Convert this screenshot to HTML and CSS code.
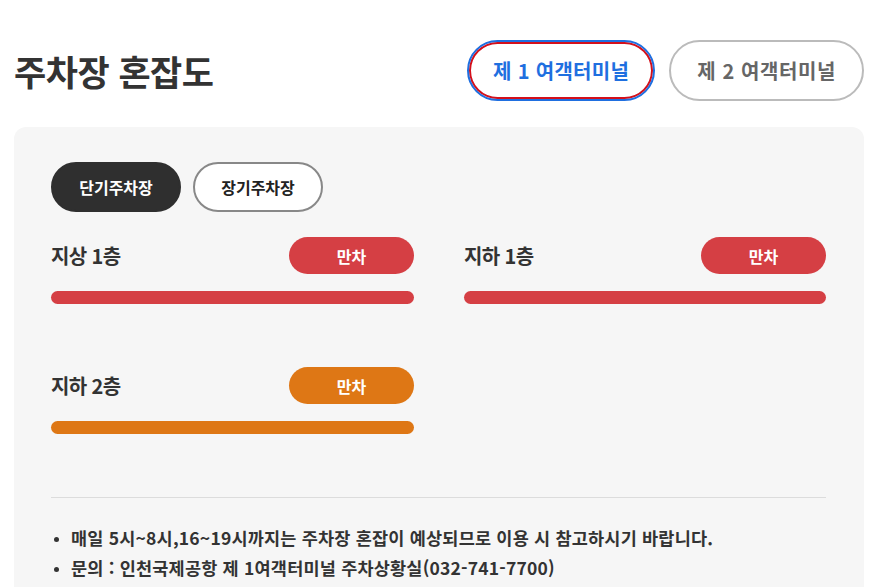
FILE: index.html
```html
<!DOCTYPE html>
<html lang="ko">
<head>
<meta charset="utf-8">
<title>주차장 혼잡도</title>
<link rel="stylesheet" href="styles.css">
</head>
<body>
<div class="page">
  <header class="head">
    <h1 class="title">주차장 혼잡도</h1>
    <div class="terminals">
      <button class="term term-active">제 1 여객터미널</button>
      <button class="term">제 2 여객터미널</button>
    </div>
  </header>
  <section class="card">
    <div class="tabs">
      <button class="tab tab-active">단기주차장</button>
      <button class="tab">장기주차장</button>
    </div>
    <div class="floors">
      <div class="floor">
        <div class="floor-head">
          <span class="floor-name">지상 1층</span>
          <span class="badge red">만차</span>
        </div>
        <div class="bar red"></div>
      </div>
      <div class="floor">
        <div class="floor-head">
          <span class="floor-name">지하 1층</span>
          <span class="badge red">만차</span>
        </div>
        <div class="bar red"></div>
      </div>
      <div class="floor">
        <div class="floor-head">
          <span class="floor-name">지하 2층</span>
          <span class="badge orange">만차</span>
        </div>
        <div class="bar orange"></div>
      </div>
    </div>
    <ul class="notes">
      <li>매일 5시~8시,16~19시까지는 주차장 혼잡이 예상되므로 이용 시 참고하시기 바랍니다.</li>
      <li>문의 : 인천국제공항 제 1여객터미널 주차상황실(032-741-7700)</li>
    </ul>
  </section>
</div>
</body>
</html>
```
FILE: styles.css
```css
* { box-sizing: border-box; }
html, body { margin: 0; padding: 0; background: #fff; }
body {
  font-family: "Noto Sans CJK KR", "Noto Sans", sans-serif;
  color: #333;
}
.page {
  padding: 40px 16px 0 14px;
}
.head {
  display: flex;
  align-items: center;
  justify-content: space-between;
}
.title {
  margin: 0;
  font-size: 35px;
  font-weight: 700;
  letter-spacing: -0.5px;
  color: #333;
  line-height: 1.2;
}
.terminals {
  display: flex;
  gap: 14px;
}
.term {
  font-family: inherit;
  height: 61px;
  padding: 0 26px;
  border-radius: 31px;
  border: 2px solid #bbbbbb;
  background: #fff;
  color: #666;
  font-size: 20px;
  font-weight: 700;
  letter-spacing: 0.6px;
  cursor: pointer;
}
.term-active {
  padding: 0 24px;
  letter-spacing: 0.3px;
  border: 2px solid #1f6fe0;
  box-shadow: inset 0 0 0 2px #d4101b;
  color: #1f6fe0;
}
.card {
  margin-top: 26px;
  background: #f6f6f6;
  border-radius: 12px;
  padding: 35px 38px 20px 37px;
}
.tabs {
  display: flex;
  gap: 12px;
}
.tab {
  font-family: inherit;
  height: 50px;
  width: 130px;
  border-radius: 25px;
  border: 2px solid #888;
  background: #fff;
  color: #222;
  font-size: 16px;
  font-weight: 700;
  cursor: pointer;
}
.tab-active {
  background: #2f2f2f;
  border-color: #2f2f2f;
  color: #fff;
}
.floors {
  margin-top: 25px;
  display: grid;
  grid-template-columns: 363px 362px;
  column-gap: 50px;
  row-gap: 63px;
}
.floor-head {
  display: flex;
  justify-content: space-between;
  align-items: center;
  height: 37px;
}
.floor-name {
  font-size: 20px;
  font-weight: 700;
  letter-spacing: -0.6px;
  color: #333;
}
.badge {
  width: 125px;
  height: 37px;
  border-radius: 19px;
  color: #fff;
  font-size: 16px;
  font-weight: 700;
  display: flex;
  align-items: center;
  justify-content: center;
}
.bar {
  margin-top: 17px;
  height: 13px;
  border-radius: 7px;
}
.red { background: #d53f44; }
.orange { background: #de7715; }
.notes {
  margin: 63px 0 0 0;
  padding: 25px 0 0 0;
  border-top: 1px solid #dcdcdc;
  list-style: none;
}
.notes li {
  position: relative;
  padding-left: 20px;
  font-size: 17.5px;
  font-weight: 600;
  line-height: 30px;
  letter-spacing: 0.2px;
  color: #333;
}
.notes li::before {
  content: "";
  position: absolute;
  left: 3px;
  top: 14px;
  width: 5px;
  height: 5px;
  border-radius: 50%;
  background: #333;
}
```
